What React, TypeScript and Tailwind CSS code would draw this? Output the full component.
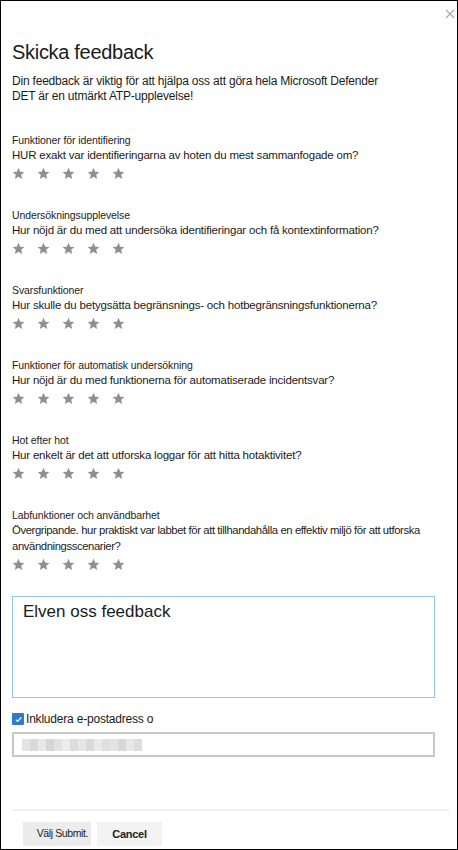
import React from "react";

const sections = [
  {
    label: "Funktioner för identifiering",
    question: "HUR exakt var identifieringarna av hoten du mest sammanfogade om?",
  },
  {
    label: "Undersökningsupplevelse",
    question: "Hur nöjd är du med att undersöka identifieringar och få kontextinformation?",
  },
  {
    label: "Svarsfunktioner",
    question: "Hur skulle du betygsätta begränsnings- och hotbegränsningsfunktionerna?",
  },
  {
    label: "Funktioner för automatisk undersökning",
    question: "Hur nöjd är du med funktionerna för automatiserade incidentsvar?",
  },
  {
    label: "Hot efter hot",
    question: "Hur enkelt är det att utforska loggar för att hitta hotaktivitet?",
  },
];

function Star() {
  return (
    <svg width="13" height="13" viewBox="0 0 24 24" className="shrink-0">
      <path
        d="M12 1.5l3.1 7.1 7.7.7-5.8 5.1 1.7 7.6L12 18l-6.7 4 1.7-7.6-5.8-5.1 7.7-.7z"
        fill="#8f8f8f"
      />
    </svg>
  );
}

function Stars() {
  return (
    <div className="mt-[3px] flex h-[14px] items-center gap-[12px]">
      {[0, 1, 2, 3, 4].map((i) => (
        <Star key={i} />
      ))}
    </div>
  );
}

// pixelated placeholder standing in for the blurred e-mail address
const blur = ["#e4e4e4", "#dadada", "#e8e8e8", "#d6d6d6", "#e2e2e2", "#ececec", "#dcdcdc", "#e6e6e6", "#d9d9d9", "#e9e9e9", "#dfdfdf", "#e3e3e3", "#d8d8d8", "#e7e7e7", "#dddddd"];

export default function App() {
  return (
    <div
      className="relative flex h-[850px] w-[458px] flex-col border border-black bg-white text-[#1b1b1b]"
      style={{ fontFamily: '"Liberation Sans", Arial, sans-serif' }}
    >
      <svg
        width="10"
        height="10"
        viewBox="0 0 10 10"
        className="absolute right-[2px] top-[8px]"
      >
        <path d="M1 1l8 8M9 1l-8 8" stroke="#a8a8a8" strokeWidth="1.1" />
      </svg>

      <div className="flex flex-col px-[11px]">
        <h1 className="mt-[39px] text-[20px] leading-[24px] tracking-[-0.3px]">
          Skicka feedback
        </h1>
        <p className="mt-[10px] w-[380px] text-[12px] leading-[15px] tracking-[-0.2px]">
          Din feedback är viktig för att hjälpa oss att göra hela Microsoft Defender
          DET är en utmärkt ATP-upplevelse!
        </p>

        <div className="mt-[29px] flex flex-col gap-[28px]">
          {sections.map((s) => (
            <div key={s.label} className="flex flex-col">
              <div className="text-[10.5px] leading-[14px] tracking-[-0.1px]">
                {s.label}
              </div>
              <div className="text-[11.5px] leading-[16px] tracking-[-0.2px]">
                {s.question}
              </div>
              <Stars />
            </div>
          ))}
          <div className="flex flex-col">
            <div className="text-[10.5px] leading-[14px] tracking-[-0.1px]">
              Labfunktioner och användbarhet
            </div>
            <div className="text-[11.3px] leading-[16px] tracking-[-0.4px]">
              <div className="whitespace-nowrap">
                Övergripande. hur praktiskt var labbet för att tillhandahålla en effektiv miljö för att utforska
              </div>
              <div>användningsscenarier?</div>
            </div>
            <Stars />
          </div>
        </div>

        <div className="mt-[25px] h-[102px] w-[423px] border border-[#94c4f0] px-[10px] pt-[4px] text-[17px] leading-[22px]">
          Elven oss feedback
        </div>

        <label className="mt-[14px] flex items-center gap-[2px] text-[12px] leading-[14px] tracking-[-0.2px]">
          <span className="flex h-[12px] w-[12px] items-center justify-center rounded-[1px] bg-[#2b7bd1]">
            <svg width="9" height="9" viewBox="0 0 10 10">
              <path d="M2 5.2l2 2L8.2 2.8" stroke="white" strokeWidth="1.3" fill="none" />
            </svg>
          </span>
          Inkludera e-postadress o
        </label>

        <div className="mt-[6px] flex h-[25px] w-[423px] items-center border-2 border-[#c8c8c8] pl-[8px]">
          <div className="flex h-[12px]">
            {blur.map((c, i) => (
              <div key={i} className="h-full w-[8px]" style={{ background: c }} />
            ))}
          </div>
        </div>
      </div>

      <div className="ml-[11px] mr-[8px] mt-auto h-[2px] bg-[#f1f1f1]" />

      <div className="flex gap-[6px] px-[22px] pb-[3px] pt-[11px]">
        <button className="flex h-[24px] w-[68px] items-center justify-end bg-[#ececec] pr-[3px] text-[10.5px] tracking-[-0.4px] text-[#222]">
          Välj Submit.
        </button>
        <button className="flex h-[24px] w-[65px] items-center justify-center bg-[#f3f3f3] text-[11px] font-bold tracking-[-0.3px] text-[#222]">
          Cancel
        </button>
      </div>
    </div>
  );
}
